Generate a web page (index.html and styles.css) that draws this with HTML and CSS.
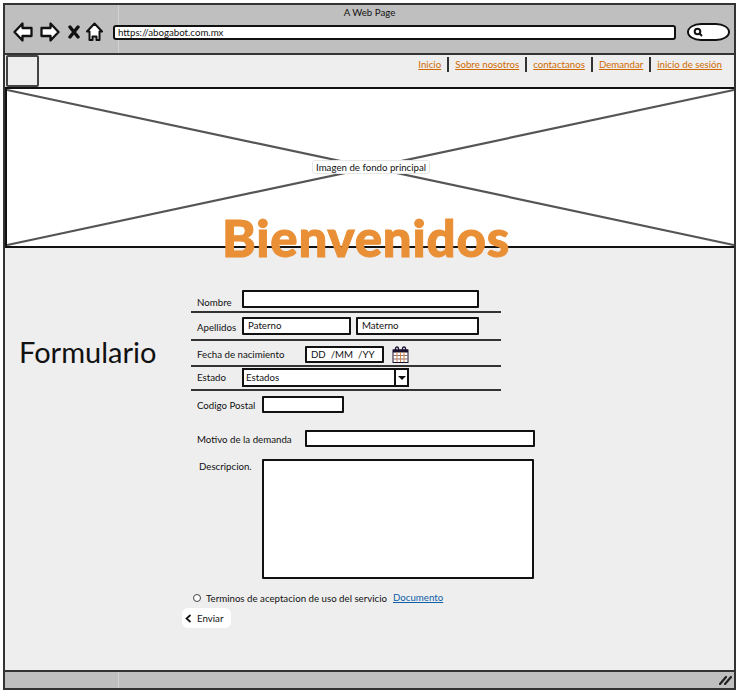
FILE: index.html
```html
<!DOCTYPE html>
<html lang="es">
<head>
<meta charset="UTF-8">
<title>A Web Page</title>
<link rel="stylesheet" href="styles.css">
</head>
<body>
<div class="window">

    <!-- Browser Chrome -->
    <header class="chrome">
        <div class="chrome-title">A Web Page</div>
        <div class="chrome-bar">
            <div class="chrome-icons">
                <svg width="20" height="20" viewBox="0 0 20 20"><path d="M1.500 10 L9.500 1.500 V6 H18.500 V14 H9.500 V18.500 Z" fill="#fff" stroke="#111" stroke-width="2.300" stroke-linejoin="round"/></svg>
                <svg class="icon-next" width="20" height="20" viewBox="0 0 20 20"><path d="M18.500 10 L10.500 1.500 V6 H1.500 V14 H10.500 V18.500 Z" fill="#fff" stroke="#111" stroke-width="2.300" stroke-linejoin="round"/></svg>
                <svg class="icon-x" width="12" height="14" viewBox="0 0 12 14"><path d="M2 2 L10 12 M10 2 L2 12" stroke="#111" stroke-width="3.400" stroke-linecap="round"/></svg>
                <svg class="icon-home" width="17" height="20" viewBox="0 0 17 20"><path d="M8.500 1.500 L16 9.500 H13.500 V18 H10.500 V14.500 H6.500 V18 H3.500 V9.500 H1 Z" fill="#fff" stroke="#111" stroke-width="2" stroke-linejoin="round"/></svg>
            </div>
            <div class="url-box">https://abogabot.com.mx</div>
            <div class="search-pill">
                <svg width="10" height="10" viewBox="0 0 10 10"><circle cx="4.500" cy="4.500" r="2.800" fill="none" stroke="#111" stroke-width="2"/><path d="M6.500 6.500 L9 9" stroke="#111" stroke-width="2"/></svg>
            </div>
        </div>
    </header>

    <!-- Top Nav -->
    <nav class="topnav">
        <div class="logo-box"></div>
        <ul class="nav-links">
            <li><a href="#">Inicio</a></li>
            <li><a href="#">Sobre nosotros</a></li>
            <li><a href="#">contactanos</a></li>
            <li><a href="#">Demandar</a></li>
            <li><a href="#">inicio de sesión</a></li>
        </ul>
    </nav>

    <!-- Hero -->
    <section class="hero">
        <svg class="hero-cross" viewBox="0 0 731 157" preserveAspectRatio="none">
            <path d="M0 1 L731 156 M731 1 L0 156" stroke="#555" stroke-width="2.200" fill="none"/>
        </svg>
        <span class="hero-label">Imagen de fondo principal</span>
        <h1 class="hero-title">Bienvenidos</h1>
    </section>

    <!-- Main Content -->
    <main class="content">
        <h2 class="form-heading">Formulario</h2>
        <form class="form">
            <div class="row row-name">
                <label class="lbl lbl-short">Nombre</label>
                <div class="field field-full"></div>
            </div>
            <div class="row row-last">
                <label class="lbl lbl-short">Apellidos</label>
                <div class="field field-half">Paterno</div>
                <div class="field field-half2">Materno</div>
            </div>
            <div class="row row-date">
                <label class="lbl lbl-long">Fecha de nacimiento</label>
                <div class="field field-date">DD &nbsp;/MM &nbsp;/YY</div>
                <svg class="calendar" width="17" height="17" viewBox="0 0 17 17">
                    <rect x="1" y="4" width="15" height="12.500" fill="#fff" stroke="#1a1030"/>
                    <rect x="1" y="3.500" width="15" height="3" fill="#1a1030"/>
                    <path d="M1 9.500 H16 M1 13 H16" stroke="#8a6a70" stroke-width="1"/>
                    <path d="M5 6 V16 M8.500 6 V16 M12 6 V16" stroke="#d08a50" stroke-width="1"/>
                    <path d="M3.500 4 V2.500 Q3.500 1 5 1 Q6.500 1 6.500 2.500 V4 M10.500 4 V2.500 Q10.500 1 12 1 Q13.500 1 13.500 2.500 V4" fill="none" stroke="#1a1030" stroke-width="1.300"/>
                </svg>
            </div>
            <div class="row row-state">
                <label class="lbl lbl-short">Estado</label>
                <div class="select-box">
                    <span class="select-text">Estados</span>
                    <span class="select-arrow"></span>
                </div>
            </div>
            <div class="plain plain-zip">
                <label class="lbl lbl-zip">Codigo Postal</label>
                <div class="field field-zip"></div>
            </div>
            <div class="plain plain-reason">
                <label class="lbl lbl-long lbl-reason">Motivo de la demanda</label>
                <div class="field field-reason"></div>
            </div>
            <div class="plain plain-desc">
                <label class="lbl lbl-desc">Descripcion.</label>
                <div class="field field-desc"></div>
            </div>
            <div class="terms">
                <span class="radio"></span>
                <span>Terminos de aceptacion de uso del servicio</span>
                <a href="#">Documento</a>
            </div>
            <button type="button" class="send">
                <svg width="7" height="9" viewBox="0 0 7 9"><path d="M5.500 1 L1.500 4.500 L5.500 8" fill="none" stroke="#111" stroke-width="1.700"/></svg>
                Enviar
            </button>
        </form>
    </main>

    <footer class="statusbar">
        <svg width="13" height="10" viewBox="0 0 13 10"><path d="M1 9 L7 2 M6 9 L12 2" stroke="#222" stroke-width="2.200" stroke-linecap="round"/></svg>
    </footer>
</div>
</body>
</html>
```
FILE: styles.css
```css
/* Basic Reset */
* {
    box-sizing: border-box;
}

body {
    margin: 0;
    padding: 3px 2px 3px 3px;
    background-color: #ffffff;
    color: #111111;
    font-family: Lato, sans-serif;
    font-size: 9.7px;
}

/* Window Frame */
.window {
    display: flex;
    flex-direction: column;
    height: 687px;
    border: 2px solid #333333;
    background-color: #eeeeee;
}

/* Browser Chrome */
.chrome {
    height: 50px;
    flex: none;
    background-color: #bfbfbf;
    background-image: linear-gradient(#d2d2d2, #d2d2d2);
    background-repeat: no-repeat;
    background-size: 1px 100%;
    background-position: 113px 0;
    border-bottom: 2px solid #333333;
}

.chrome-title {
    padding-top: 1px;
    text-align: center;
    line-height: 12px;
}

.chrome-bar {
    display: flex;
    align-items: center;
    margin-top: 4px;
    padding-left: 8px;
}

.chrome-icons {
    display: flex;
    align-items: center;
    width: 100px;
}

.icon-next {
    margin-left: 7px;
}

.icon-x {
    margin-left: 8px;
}

.icon-home {
    margin-left: 6px;
}

.url-box {
    width: 563px;
    height: 15px;
    padding-left: 3px;
    background-color: #ffffff;
    border: 2px solid #111111;
    border-radius: 3px;
    line-height: 11px;
}

.search-pill {
    display: flex;
    align-items: center;
    width: 43px;
    height: 18px;
    margin-left: 11px;
    padding-left: 4px;
    background-color: #ffffff;
    border: 2px solid #111111;
    border-radius: 14px / 9px;
}

/* Top Nav */
.topnav {
    display: flex;
    justify-content: space-between;
    height: 32px;
    flex: none;
}

.logo-box {
    width: 33px;
    height: 32px;
    margin-left: 1px;
    border: 2px solid #444444;
    border-radius: 2px;
}

.nav-links {
    display: flex;
    align-items: center;
    height: 15px;
    margin: 2px 12px 0 0;
    padding: 0;
    list-style: none;
}

.nav-links li {
    padding: 0 6px;
    line-height: 15px;
    border-left: 2px solid #333333;
}

.nav-links li:first-child {
    border-left: none;
}

.nav-links li:last-child {
    padding-right: 0;
}

.nav-links a {
    color: #d06a00;
}

/* Hero */
.hero {
    position: relative;
    height: 161px;
    flex: none;
    background-color: #ffffff;
    border: 2px solid #111111;
    border-width: 2px 0 2px 2px;
}

.hero-cross {
    display: block;
    width: 100%;
    height: 100%;
}

.hero-label {
    position: absolute;
    left: 305px;
    top: 71px;
    padding: 0 3px;
    height: 14px;
    line-height: 13px;
    background-color: #ffffff;
    border: 1px solid #e6e6e6;
    border-radius: 3px;
}

.hero-title {
    position: absolute;
    left: 215px;
    top: 119px;
    margin: 0;
    color: #e98f36;
    font-size: 51px;
    font-weight: 900;
    line-height: 60px;
    letter-spacing: 0.800px;
    -webkit-text-stroke: 1px #e98f36;
}

/* Main Content */
.content {
    display: flex;
    flex: 1;
    min-height: 0;
}

.form-heading {
    width: 186px;
    margin: 87px 0 0 0;
    padding-left: 14px;
    font-size: 29px;
    font-weight: 400;
    line-height: 34px;
    color: #111111;
}

/* Form Rows */
.form {
    width: 350px;
    padding-top: 42px;
}

.row {
    display: flex;
    border-bottom: 2px solid #333333;
    width: 310px;
}

.row-name {
    height: 23px;
}

.row-last {
    height: 28px;
    padding-top: 4px;
}

.row-date {
    height: 26px;
    padding-top: 5px;
}

.row-state {
    height: 24px;
    padding-top: 1px;
}

.plain {
    display: flex;
}

.plain-zip {
    margin-top: 5px;
}

.plain-reason {
    margin-top: 17px;
}

.plain-desc {
    margin-top: 12px;
}

.lbl {
    flex: none;
    padding-left: 6px;
    line-height: 12px;
}

.lbl-short {
    width: 51px;
    padding-top: 4px;
}

.row-name .lbl-short {
    padding-top: 6px;
}

.row-state .lbl-short {
    padding-top: 3px;
}

.lbl-long {
    width: 114px;
    padding-top: 2px;
}

.lbl-reason {
    padding-top: 3px;
}

.lbl-zip {
    width: 71px;
    padding-top: 3px;
}

.lbl-desc {
    width: 71px;
    padding: 1px 0 0 8px;
}

/* Fields */
.field {
    flex: none;
    padding-left: 4px;
    background-color: #ffffff;
    border: 2px solid #111111;
    border-radius: 1px;
    line-height: 12px;
}

.field-full {
    width: 237px;
    height: 18px;
}

.field-half {
    width: 109px;
    height: 18px;
}

.field-half2 {
    width: 123px;
    height: 18px;
    margin-left: 5px;
}

.field-date {
    width: 79px;
    height: 17px;
}

.calendar {
    margin-left: 8px;
}

.select-box {
    display: flex;
    width: 167px;
    height: 19px;
    background-color: #ffffff;
    border: 2px solid #111111;
}

.select-text {
    flex: 1;
    padding-left: 2px;
    line-height: 15px;
}

.select-arrow {
    position: relative;
    width: 13px;
    border-left: 2px solid #111111;
}

.select-arrow::after {
    content: "";
    position: absolute;
    left: 2px;
    top: 6px;
    border: 4px solid transparent;
    border-top: 4px solid #111111;
}

.field-zip {
    width: 82px;
    height: 17px;
}

.field-reason {
    width: 230px;
    height: 17px;
}

.field-desc {
    width: 272px;
    height: 120px;
}

/* Terms */
.terms {
    display: flex;
    align-items: center;
    gap: 4px;
    height: 14px;
    margin: 12px 0 0 2px;
}

.radio {
    width: 8px;
    height: 8px;
    margin-right: 1px;
    background-color: #ffffff;
    border: 1px solid #444444;
    border-radius: 50%;
}

.terms a {
    margin: -2px 0 0 2px;
    color: #0d5fa8;
}

/* Submit Button */
.send {
    display: flex;
    align-items: center;
    gap: 5px;
    width: 49px;
    height: 20px;
    margin: 3px 0 0 -9px;
    padding: 0 0 0 3px;
    background-color: #ffffff;
    border: none;
    border-radius: 6px;
    color: #111111;
    font-family: Lato, sans-serif;
    font-size: 9.7px;
}

/* Status Bar */
.statusbar {
    display: flex;
    align-items: center;
    justify-content: flex-end;
    height: 18px;
    flex: none;
    padding-right: 2px;
    background-color: #bfbfbf;
    background-image: linear-gradient(#d2d2d2, #d2d2d2);
    background-repeat: no-repeat;
    background-size: 1px 100%;
    background-position: 113px 0;
    border-top: 2px solid #333333;
}
```
